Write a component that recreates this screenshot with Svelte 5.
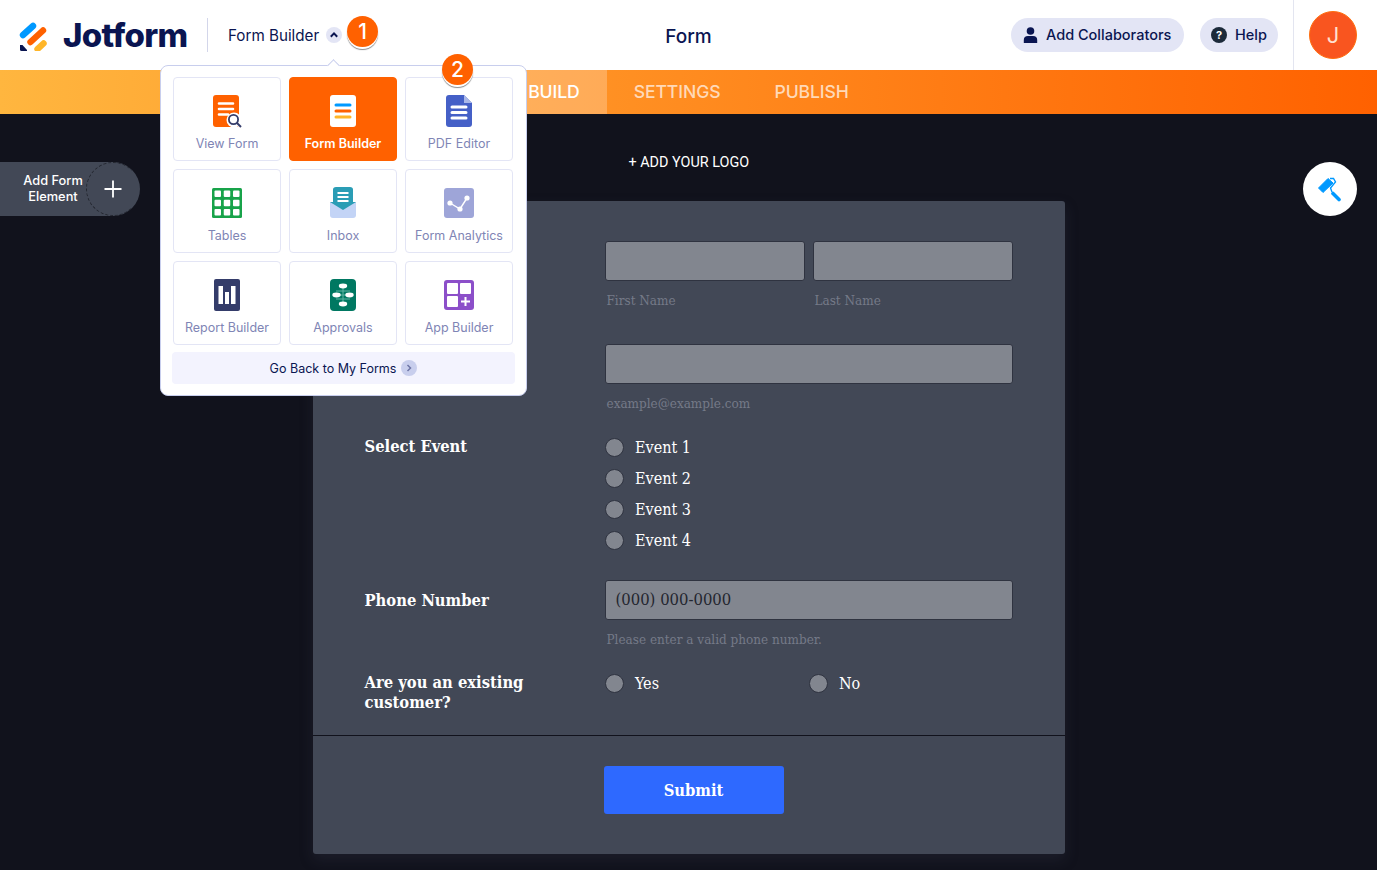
<script>
  const tabs = ['BUILD', 'SETTINGS', 'PUBLISH'];
  const events = ['Event 1', 'Event 2', 'Event 3', 'Event 4'];
</script>

<div class="page">
  <header class="top">
    <div class="brand">
      <svg class="logo" width="30" height="30" viewBox="0 0 30 30" aria-hidden="true">
        <path d="M4 14 L14 5" stroke="#0099ff" stroke-width="6.4" stroke-linecap="round"/>
        <path d="M11.5 21 L24 9.5" stroke="#ff6100" stroke-width="6.4" stroke-linecap="round"/>
        <path d="M18.5 28 L24.5 22.5" stroke="#ffb629" stroke-width="6.4" stroke-linecap="round"/>
        <path d="M1 24 H3.5 L8 29 V30 H2.5 Q1 30 1 28.5 Z" fill="#0a1551"/>
      </svg>
      <span class="wordmark">Jotform</span>
    </div>
    <div class="switcher">
      <span>Form Builder</span>
      <span class="chev">
        <svg width="10" height="8" viewBox="0 0 10 8"><path d="M1.800 5.800 L5 2.400 L8.200 5.800" fill="none" stroke="#0a1551" stroke-width="2"/></svg>
      </span>
    </div>
    <div class="title">Form</div>
    <div class="actions">
      <button class="pill collab">
        <svg width="15" height="16" viewBox="0 0 15 16"><circle cx="7.5" cy="4" r="3.8" fill="#0a1551"/><path d="M0.8 16 V13 Q0.8 9 5 9 H10 Q14.2 9 14.2 13 V16 Z" fill="#0a1551"/></svg>
        Add Collaborators
      </button>
      <button class="pill help">
        <span class="q">?</span>
        Help
      </button>
    </div>
    <div class="account"><span class="avatar">J</span></div>
  </header>

  <nav class="tabs">
    {#each tabs as tab, i}
      <span class="tab" class:active={i === 0}>{tab}</span>
    {/each}
  </nav>

  <main class="stage">
    <div class="logo-row">+ ADD YOUR LOGO</div>
    <form class="card">
      <div class="row">
        <div class="lbl">Name</div>
        <div class="pair">
          <div><div class="field"></div><div class="hint">First Name</div></div>
          <div><div class="field"></div><div class="hint">Last Name</div></div>
        </div>
      </div>
      <div class="row second">
        <div class="lbl">E-mail</div>
        <div><div class="field"></div><div class="hint">example@example.com</div></div>
      </div>
      <div class="row third">
        <div class="lbl sel">Select Event</div>
        <div>
          {#each events as ev}
            <div class="opt"><span class="radio"></span>{ev}</div>
          {/each}
        </div>
      </div>
      <div class="row fourth">
        <div class="lbl ph">Phone Number</div>
        <div><div class="field text">(000) 000-0000</div><div class="hint">Please enter a valid phone number.</div></div>
      </div>
      <div class="row fifth">
        <div class="lbl two">Are you an existing customer?</div>
        <div class="yn">
          <div class="opt"><span class="radio"></span>Yes</div>
          <div class="opt"><span class="radio"></span>No</div>
        </div>
      </div>
      <div class="foot"><button type="button" class="submit">Submit</button></div>
    </form>

    <div class="add-el">
      <span class="add-txt">Add Form<br />Element</span>
      <span class="add-btn">
        <svg width="18" height="18" viewBox="0 0 18 18"><path d="M9 0.5 V17.5 M0.5 9 H17.5" stroke="#fff" stroke-width="1.8"/></svg>
      </span>
    </div>

    <div class="brush">
      <svg width="26" height="26" viewBox="0 0 26 26">
        <path d="M1.500 12 L11 2.500 L16 7 L6 16.500 Z" fill="#0099ff" stroke="#0099ff" stroke-linejoin="round"/>
        <path d="M13 2.500 L16.500 2.500 L18.500 6 L13.500 12 L15 16" fill="none" stroke="#0099ff" stroke-width="1.400"/>
        <path d="M16 17.500 L22 23.500" stroke="#0099ff" stroke-width="3.600" stroke-linecap="round"/>
      </svg>
    </div>
  </main>

  <span class="badge b1">1</span>

  <div class="pop">
    <span class="arrow"></span>
    <div class="grid">
      <div class="cell">
        <svg width="34" height="34" viewBox="0 0 34 34">
          <rect x="3" y="1" width="26" height="32" rx="3" fill="#ff6100"/>
          <path d="M9 9.500 H23 M9 15 H23 M9 20.500 H18" stroke="#fff" stroke-width="2.600" stroke-linecap="round"/>
          <circle cx="24" cy="26" r="7.500" fill="#fff"/>
          <circle cx="23.500" cy="25.500" r="4.600" fill="#fff" stroke="#343c6a" stroke-width="1.800"/>
          <path d="M27 29 L31 33" stroke="#343c6a" stroke-width="2"/>
        </svg>
        <span>View Form</span>
      </div>
      <div class="cell on">
        <svg width="34" height="34" viewBox="0 0 34 34">
          <rect x="4" y="1" width="26" height="32" rx="3" fill="#fff"/>
          <path d="M10 11 H24" stroke="#0099ff" stroke-width="3" stroke-linecap="round"/>
          <path d="M10 17 H24" stroke="#ff6100" stroke-width="3" stroke-linecap="round"/>
          <path d="M10 23 H24" stroke="#ffb629" stroke-width="3" stroke-linecap="round"/>
        </svg>
        <span>Form Builder</span>
      </div>
      <div class="cell">
        <svg width="34" height="34" viewBox="0 0 34 34">
          <path d="M7 1 H22 L30 9 V30 Q30 33 27 33 H7 Q4 33 4 30 V4 Q4 1 7 1 Z" fill="#4560c7"/>
          <path d="M22 1 L30 9 H22 Z" fill="#a9b7e8"/>
          <path d="M10 13 H24 M10 18.500 H24 M10 24 H24" stroke="#fff" stroke-width="3" stroke-linecap="round"/>
        </svg>
        <span>PDF Editor</span>
      </div>

      <div class="cell">
        <svg width="34" height="34" viewBox="0 0 34 34">
          <rect x="2" y="2" width="30" height="30" rx="1.500" fill="#18a34a"/>
          {#each [4.500, 13.750, 23] as y}
            {#each [4.500, 13.750, 23] as x}
              <rect {x} {y} width="6.500" height="6.500" rx="1" fill="#fff"/>
            {/each}
          {/each}
        </svg>
        <span>Tables</span>
      </div>
      <div class="cell">
        <svg width="34" height="34" viewBox="0 0 34 34">
          <path d="M4 16 H30 V29 Q30 32 27 32 H7 Q4 32 4 29 Z" fill="#c3d4f6"/>
          <path d="M7 3.500 Q7 1 10 1 H24 Q27 1 27 3.500 V16 L30 16 L17 24 L4 16 L7 16 Z" fill="#2a9db5"/>
          <path d="M11.500 7 H22.500 M11.500 11 H22.500 M11.500 15 H22.500" stroke="#fff" stroke-width="2.200"/>
        </svg>
        <span>Inbox</span>
      </div>
      <div class="cell">
        <svg width="34" height="34" viewBox="0 0 34 34">
          <rect x="2" y="2" width="30" height="30" rx="3" fill="#9ea5d8"/>
          <path d="M8 17 L18 23 L25 12" fill="none" stroke="#fff" stroke-width="1.400"/>
          <circle cx="8" cy="17" r="2.600" fill="#fff"/>
          <circle cx="18" cy="23" r="2.600" fill="#fff"/>
          <circle cx="25" cy="12" r="2.600" fill="#fff"/>
        </svg>
        <span>Form Analytics</span>
      </div>

      <div class="cell">
        <svg width="34" height="34" viewBox="0 0 34 34">
          <rect x="4" y="1" width="26" height="32" rx="2" fill="#343c6a"/>
          <path d="M8.500 8 H13 V26 H8.500 Z M15 14 H19 V26 H15 Z M21 8 H25.500 V26 H21 Z" fill="#fff"/>
        </svg>
        <span>Report Builder</span>
      </div>
      <div class="cell">
        <svg width="34" height="34" viewBox="0 0 34 34">
          <rect x="4" y="1" width="26" height="32" rx="4" fill="#007862"/>
          <path d="M17 8 V25 M10 17 H24 M10 13 H24 M10 21 H24" stroke="#5fb5a3" stroke-width="1"/>
          <ellipse cx="17" cy="8" rx="4.200" ry="2.400" fill="#fff"/>
          <ellipse cx="10.500" cy="17" rx="4.200" ry="2.400" fill="#fff"/>
          <ellipse cx="23.500" cy="17" rx="4.200" ry="2.400" fill="#fff"/>
          <ellipse cx="17" cy="26" rx="4.200" ry="2.400" fill="#fff"/>
        </svg>
        <span>Approvals</span>
      </div>
      <div class="cell">
        <svg width="34" height="34" viewBox="0 0 34 34">
          <rect x="2" y="2" width="30" height="30" rx="3" fill="#8c4fc9"/>
          <rect x="5" y="5" width="11" height="11" rx="1" fill="#fff"/>
          <rect x="18" y="5" width="11" height="11" rx="1" fill="#fff"/>
          <rect x="5" y="18" width="11" height="11" rx="1" fill="#fff"/>
          <path d="M23.500 19 V28 M19 23.500 H28" stroke="#fff" stroke-width="2"/>
        </svg>
        <span>App Builder</span>
      </div>
    </div>
    <div class="back">
      Go Back to My Forms
      <span class="go">
        <svg width="8" height="10" viewBox="0 0 8 10"><path d="M2.500 2 L5.500 5 L2.500 8" fill="none" stroke="#6f76a7" stroke-width="1.500"/></svg>
      </span>
    </div>
    <span class="badge b2">2</span>
  </div>
</div>

<style>
  :global(body) {
    margin: 0;
    background: #11121c;
  }
  .page {
    position: relative;
    height: 870px;
    overflow: hidden;
    font-family: 'Inter', 'Liberation Sans', sans-serif;
  }
  .top {
    height: 70px;
    background: #fff;
    display: flex;
    align-items: center;
    position: relative;
  }
  .brand {
    display: flex;
    align-items: center;
    height: 34px;
    padding-left: 19px;
    box-sizing: border-box;
    border-right: 1px solid #d3d6ea;
    width: 208px;
    gap: 14px;
  }
  .logo {
    flex: none;
    margin-top: 1px;
  }
  .wordmark {
    font-weight: 800;
    font-size: 33px;
    letter-spacing: -0.7px;
    color: #0a1551;
  }
  .switcher {
    display: flex;
    align-items: center;
    gap: 7px;
    padding-left: 20px;
    font-size: 15.200px;
    color: #0a1551;
    width: 172px;
  }
  .chev {
    width: 16px;
    height: 16px;
    border-radius: 50%;
    background: #e3e5f5;
    display: flex;
    align-items: center;
    justify-content: center;
  }
  .title {
    position: absolute;
    left: 0;
    right: 0;
    top: 25px;
    text-align: center;
    font-size: 19px;
    line-height: 23px;
    font-weight: 500;
    color: #0a1551;
    pointer-events: none;
  }
  .actions {
    margin-left: auto;
    display: flex;
    gap: 16px;
    padding-right: 15px;
    height: 70px;
    align-items: center;
    border-right: 1px solid #e3e5f0;
  }
  .pill {
    height: 34px;
    border: 0;
    border-radius: 17px;
    background: #e3e5f5;
    color: #0a1551;
    font-family: inherit;
    font-size: 14.500px;
    font-weight: 500;
    display: flex;
    align-items: center;
    gap: 8px;
    padding: 0 0 2px 12px;
  }
  .collab {
    width: 173px;
  }
  .help {
    width: 78px;
    gap: 8px;
    padding-left: 11px;
  }
  .q {
    width: 16px;
    height: 16px;
    border-radius: 50%;
    background: #1c2a3a;
    color: #fff;
    font-size: 11px;
    font-weight: 700;
    display: flex;
    align-items: center;
    justify-content: center;
    margin-top: 2px;
  }
  .collab svg {
    margin-top: 2px;
  }
  .account {
    width: 83px;
    display: flex;
    justify-content: center;
    padding-right: 5px;
    box-sizing: border-box;
  }
  .avatar {
    width: 48px;
    height: 48px;
    border-radius: 50%;
    background: #f9551f;
    border: 1px solid #ff6f10;
    box-sizing: border-box;
    color: #ffe0d0;
    font-size: 22px;
    display: flex;
    align-items: center;
    justify-content: center;
  }
  .tabs {
    height: 44px;
    background: linear-gradient(90deg, #ffb63f 0%, #ff6100 100%);
    display: flex;
    justify-content: center;
  }
  .tab {
    padding: 0 27px;
    line-height: 44px;
    font-size: 17.600px;
    font-weight: 500;
    color: #ffd9b8;
    letter-spacing: -0.1px;
  }
  .tab.active {
    background: rgba(255, 255, 255, 0.24);
    color: #fff;
  }
  .stage {
    position: relative;
    display: flex;
    flex-direction: column;
    align-items: center;
  }
  .logo-row {
    width: 752px;
    height: 87px;
    box-sizing: border-box;
    padding: 40px 0 0 316px;
    color: #fff;
    font-family: 'Roboto', sans-serif;
    font-size: 14.400px;
    line-height: 18px;
  }
  .card {
    width: 752px;
    height: 653px;
    background: #424856;
    border-radius: 3px;
    box-shadow: 0 6px 14px rgba(60, 65, 85, 0.25);
    box-sizing: border-box;
    padding-top: 40px;
    font-family: 'DejaVu Serif Condensed', 'DejaVu Serif', serif;
  }
  .row {
    display: grid;
    grid-template-columns: 240px 408px;
    padding-left: 52px;
    color: #fff;
  }
  .second {
    margin-top: 35px;
  }
  .third {
    margin-top: 20px;
  }
  .fourth {
    margin-top: 24px;
  }
  .fifth {
    margin-top: 20px;
    padding-bottom: 22px;
    border-bottom: 1px solid #11121c;
  }
  .lbl {
    font-size: 16.400px;
    line-height: 20px;
    font-weight: 700;
    padding-right: 60px;
  }
  .sel {
    padding-top: 5px;
  }
  .ph {
    padding-top: 11px;
  }
  .two {
    padding-top: 5px;
  }
  .pair {
    display: grid;
    grid-template-columns: 200px 200px;
    gap: 8px;
  }
  .field {
    height: 40px;
    box-sizing: border-box;
    background: #82868f;
    border: 1px solid #2f3340;
    border-radius: 3px;
  }
  .field.text {
    padding-left: 10px;
    line-height: 37px;
    font-size: 16.500px;
    color: #22252e;
  }
  .hint {
    margin-top: 11px;
    padding-left: 2px;
    font-size: 13.400px;
    line-height: 17px;
    color: #757a88;
  }
  .opt {
    height: 31px;
    display: flex;
    align-items: center;
    gap: 11px;
    font-size: 16px;
    color: #fff;
  }
  .radio {
    width: 19px;
    height: 19px;
    box-sizing: border-box;
    border-radius: 50%;
    background: #82868f;
    border: 1px solid #2f3340;
    margin-left: 0.500px;
  }
  .yn {
    display: grid;
    grid-template-columns: 204px 1fr;
  }
  .foot {
    padding: 30px 0 0 291px;
  }
  .submit {
    width: 180px;
    height: 48px;
    border: 0;
    border-radius: 3px;
    background: #2e69ff;
    color: #fff;
    font-family: inherit;
    font-size: 16.400px;
    font-weight: 700;
  }
  .add-el {
    position: absolute;
    left: 0;
    top: 48px;
    width: 140px;
    height: 54px;
    background: #424856;
    border-radius: 0 27px 27px 0;
    color: #fff;
    font-size: 12.800px;
    font-weight: 500;
    line-height: 16px;
    text-align: center;
    display: flex;
    align-items: center;
  }
  .add-txt {
    width: 106px;
  }
  .add-btn {
    position: absolute;
    right: 0;
    top: 0;
    width: 54px;
    height: 54px;
    box-sizing: border-box;
    border-radius: 50%;
    border: 1px dashed #23262f;
    border-right-color: transparent;
    display: flex;
    align-items: center;
    justify-content: center;
  }
  .brush {
    position: absolute;
    right: 20px;
    top: 48px;
    width: 54px;
    height: 54px;
    border-radius: 50%;
    background: #fff;
    display: flex;
    align-items: center;
    justify-content: center;
  }
  .badge {
    position: absolute;
    width: 31px;
    height: 31px;
    border-radius: 50%;
    background: #ff6100;
    color: #fff;
    font-size: 21px;
    font-weight: 500;
    display: flex;
    align-items: center;
    justify-content: center;
    box-shadow: 0 2px 0 #fff, 0 3px 1px #8a8a8a;
    z-index: 3;
  }
  .b1 {
    left: 347px;
    top: 16px;
  }
  .b2 {
    left: 281px;
    top: -12px;
  }
  .pop {
    position: absolute;
    left: 160px;
    top: 65px;
    width: 367px;
    height: 331px;
    box-sizing: border-box;
    background: #fff;
    border: 1px solid #c8ceed;
    border-radius: 8px;
    padding: 11px 12px 0;
    z-index: 2;
  }
  .arrow {
    position: absolute;
    left: 168px;
    top: -5px;
    width: 8px;
    height: 8px;
    background: #fff;
    border-left: 1px solid #c8ceed;
    border-top: 1px solid #c8ceed;
    transform: rotate(45deg);
  }
  .grid {
    display: grid;
    grid-template-columns: repeat(3, 108px);
    grid-auto-rows: 84px;
    gap: 8px;
  }
  .cell {
    box-sizing: border-box;
    border: 1px solid #e3e5f5;
    border-radius: 4px;
    display: flex;
    flex-direction: column;
    align-items: center;
    padding-top: 16px;
    font-size: 12.500px;
    color: #7f85b5;
  }
  .cell span {
    margin-top: 8px;
    line-height: 16px;
  }
  .cell.on {
    background: #ff6100;
    border-color: #ff6100;
    color: #fff;
    font-weight: 600;
  }
  .back {
    margin: 7px 0 0 -1px;
    width: 343px;
    height: 32px;
    background: #f3f3fe;
    border-radius: 4px;
    display: flex;
    align-items: center;
    justify-content: center;
    gap: 5px;
    font-size: 12.500px;
    color: #0a1551;
  }
  .go {
    width: 16px;
    height: 16px;
    border-radius: 50%;
    background: #c8ceed;
    display: flex;
    align-items: center;
    justify-content: center;
  }
</style>
